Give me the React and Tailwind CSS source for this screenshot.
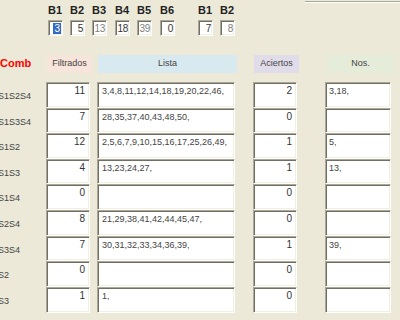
import React from 'react';

const topCols = [
    { label: 'B1', value: '3', ml: 'ml-[48px]', selected: true },
    { label: 'B2', value: '5', ml: 'ml-[7px]' },
    { label: 'B3', value: '13', ml: 'ml-[7px]', dim: true },
    { label: 'B4', value: '18', ml: 'ml-[8px]' },
    { label: 'B5', value: '39', ml: 'ml-[7px]', dim: true },
    { label: 'B6', value: '0', ml: 'ml-[8px]' },
    { label: 'B1', value: '7', ml: 'ml-[23px]' },
    { label: 'B2', value: '8', ml: 'ml-[7px]', dim: true },
];

const rows = [
    { name: 'S1S2S4', filt: '11', lista: '3,4,8,11,12,14,18,19,20,22,46,', aciertos: '2', nos: '3,18,', h: 'h-[26px]' },
    { name: 'S1S3S4', filt: '7', lista: '28,35,37,40,43,48,50,', aciertos: '0', nos: '', h: 'h-[25px]' },
    { name: 'S1S2', filt: '12', lista: '2,5,6,7,9,10,15,16,17,25,26,49,', aciertos: '1', nos: '5,', h: 'h-[26px]' },
    { name: 'S1S3', filt: '4', lista: '13,23,24,27,', aciertos: '1', nos: '13,', h: 'h-[25px]' },
    { name: 'S1S4', filt: '0', lista: '', aciertos: '0', nos: '', h: 'h-[26px]' },
    { name: 'S2S4', filt: '8', lista: '21,29,38,41,42,44,45,47,', aciertos: '0', nos: '', h: 'h-[26px]' },
    { name: 'S3S4', filt: '7', lista: '30,31,32,33,34,36,39,', aciertos: '1', nos: '39,', h: 'h-[25px]' },
    { name: 'S2', filt: '0', lista: '', aciertos: '0', nos: '', h: 'h-[26px]' },
    { name: 'S3', filt: '1', lista: '1,', aciertos: '0', nos: '', h: 'h-[26px]' },
];

const sunken = 'bg-white border border-t-[#aca899] border-l-[#aca899] border-r-white border-b-white shadow-[inset_1px_1px_0_#716f64,inset_-1px_-1px_0_#f1efe2]';

export default function App() {
    return (
        <div className="relative w-[400px] h-[320px] overflow-hidden bg-[#ece9d8] text-[#333]" style={{ fontFamily: '"Liberation Sans", Arial, sans-serif' }}>
            {/* group box edge, top right */}
            <div className="absolute left-[305px] top-[1px] w-[95px] h-[1px] bg-[#aca899]" />
            <div className="absolute left-[305px] top-[2px] w-[95px] h-[1px] bg-white" />

            <div className="flex pt-[3px]">
                {topCols.map((c, i) => (
                    <div key={i} className={`flex flex-col w-[15px] ${c.ml}`}>
                        <span className="h-[14px] text-[11px] font-bold leading-[14px] text-[#222] whitespace-nowrap">{c.label}</span>
                        <div className={`mt-[3px] h-[16px] flex items-center justify-end pr-[1px] ${sunken}`}>
                            {c.selected ? (
                                <span className="bg-[#316ac5] text-white text-[10px] leading-[11px] px-[1px]">{c.value}</span>
                            ) : (
                                <span className={`text-[10px] leading-[11px] tracking-[-0.3px] ${c.dim ? 'text-[#808080]' : 'text-[#333]'}`}>{c.value}</span>
                            )}
                        </div>
                    </div>
                ))}
            </div>

            <div className="flex items-center mt-[19px] h-[18px]">
                <span className="w-[47px] text-[11px] font-bold text-[#ff0000] -mt-[2px]">Comb</span>
                <div className="w-[45px] h-[18px] bg-[#f7e4da] flex items-center justify-center text-[9px] text-[#444]">Filtrados</div>
                <div className="ml-[6px] w-[139px] h-[18px] bg-[#d8e9f0] flex items-center justify-center text-[9px] text-[#444]">Lista</div>
                <div className="ml-[17px] w-[45px] h-[18px] bg-[#e1dcea] flex items-center justify-center text-[9px] text-[#444]">Aciertos</div>
                <div className="ml-[28px] w-[67px] h-[18px] bg-[#e6ecda] flex items-center justify-center text-[9px] text-[#444]">Nos.</div>
            </div>

            <div className="flex flex-col mt-[9px]">
                {rows.map((r, i) => (
                    <div key={i} className={`flex ${r.h}`}>
                        <span className="w-[48px] -ml-[2px] pr-[2px] pt-[9px] text-[9px] leading-[10px] text-[#444] whitespace-nowrap">{r.name}</span>
                        <div className={`w-[44px] text-right pr-[4px] pt-[2px] text-[10px] leading-[12px] ${sunken}`}>{r.filt}</div>
                        <div className={`ml-[7px] w-[138px] pl-[4px] pt-[3px] text-[9px] leading-[10px] text-[#444] whitespace-nowrap overflow-hidden ${sunken}`}>{r.lista}</div>
                        <div className={`ml-[18px] w-[44px] text-right pr-[4px] pt-[2px] text-[10px] leading-[12px] ${sunken}`}>{r.aciertos}</div>
                        <div className={`ml-[28px] w-[66px] pl-[3px] pt-[3px] text-[9px] leading-[10px] text-[#444] whitespace-nowrap ${sunken}`}>{r.nos}</div>
                    </div>
                ))}
            </div>
        </div>
    );
}
